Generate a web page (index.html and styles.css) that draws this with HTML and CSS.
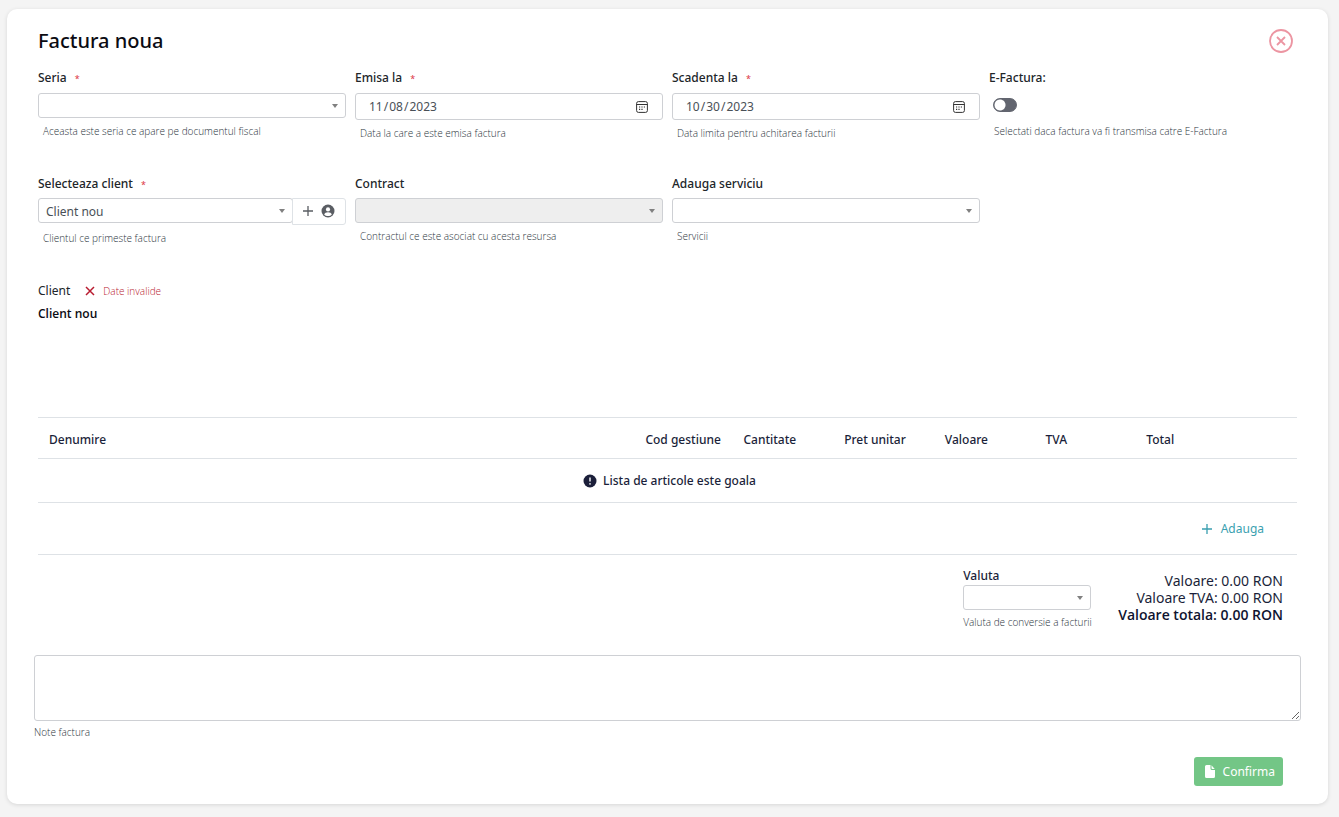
FILE: index.html
```html
<!DOCTYPE html>
<html lang="ro">
<head>
<meta charset="utf-8">
<title>Factura noua</title>
<link rel="stylesheet" href="styles.css">
</head>
<body>
<main class="card">
  <header class="card-header">
    <h1 class="title">Factura noua</h1>
    <button class="close" type="button" aria-label="Inchide">
      <svg width="24" height="24" viewBox="0 0 24 24" fill="none" stroke="currentColor" stroke-width="1.8"><circle cx="12" cy="12" r="11"/><path d="M8 8l8 8M16 8l-8 8"/></svg>
    </button>
  </header>

  <form class="form">
    <div class="fields">
      <div class="field">
        <label class="label" for="seria">Seria <span class="required">*</span></label>
        <select class="control select" id="seria"><option></option></select>
        <p class="help">Aceasta este seria ce apare pe documentul fiscal</p>
      </div>
      <div class="field">
        <label class="label" for="emisa">Emisa la <span class="required">*</span></label>
        <input class="control date" id="emisa" type="date" value="2023-11-08">
        <p class="help">Data la care a este emisa factura</p>
      </div>
      <div class="field">
        <label class="label" for="scadenta">Scadenta la <span class="required">*</span></label>
        <input class="control date" id="scadenta" type="date" value="2023-10-30">
        <p class="help">Data limita pentru achitarea facturii</p>
      </div>
      <div class="field">
        <label class="label" for="efactura">E-Factura:</label>
        <div class="switch-row"><input class="switch" id="efactura" type="checkbox" role="switch"></div>
        <p class="help">Selectati daca factura va fi transmisa catre E-Factura</p>
      </div>
    </div>

    <div class="fields fields-second">
      <div class="field">
        <label class="label" for="client">Selecteaza client <span class="required">*</span></label>
        <div class="group">
          <select class="control select" id="client"><option>Client nou</option></select>
          <button class="add-client" type="button" aria-label="Adauga client">
            <svg width="10" height="10" viewBox="0 0 10 10" fill="none" stroke="currentColor" stroke-width="1.3"><path d="M5 0v10M0 5h10"/></svg>
            <svg width="14" height="14" viewBox="0 0 14 14"><circle cx="7" cy="7" r="6.5" fill="currentColor"/><circle cx="7" cy="5.4" r="2.1" fill="#fff"/><path d="M3.2 10.6c.5-1.7 1.9-2.4 3.8-2.4s3.3.7 3.8 2.4c-1 1-2.3 1.5-3.8 1.5s-2.8-.5-3.8-1.5z" fill="#fff"/></svg>
          </button>
        </div>
        <p class="help">Clientul ce primeste factura</p>
      </div>
      <div class="field">
        <label class="label" for="contract">Contract</label>
        <select class="control select" id="contract" disabled><option></option></select>
        <p class="help">Contractul ce este asociat cu acesta resursa</p>
      </div>
      <div class="field">
        <label class="label" for="serviciu">Adauga serviciu</label>
        <select class="control select" id="serviciu"><option></option></select>
        <p class="help">Servicii</p>
      </div>
    </div>

    <section class="client">
      <div class="client-head">
        <span>Client</span>
        <span class="invalid">
          <svg width="10" height="10" viewBox="0 0 10 10" fill="none" stroke="currentColor" stroke-width="1.5"><path d="M1 1l8 8M9 1L1 9"/></svg>
          Date invalide
        </span>
      </div>
      <p class="client-name">Client nou</p>
    </section>

    <table class="items">
      <colgroup><col><col class="col-code"><col class="col-num"><col class="col-num"><col class="col-num"><col class="col-num"><col class="col-num"><col class="col-action"></colgroup>
      <thead>
        <tr><th>Denumire</th><th>Cod gestiune</th><th>Cantitate</th><th>Pret unitar</th><th>Valoare</th><th>TVA</th><th>Total</th><th></th></tr>
      </thead>
      <tbody>
        <tr class="row-empty"><td colspan="8"><div class="empty">
          <svg width="14" height="14" viewBox="0 0 14 14"><circle cx="7" cy="7" r="6.5" fill="currentColor"/><path d="M7 3.4v4.2" stroke="#fff" stroke-width="1.4"/><circle cx="7" cy="9.9" r=".8" fill="#fff"/></svg>
          Lista de articole este goala
        </div></td></tr>
        <tr class="row-add"><td colspan="8"><button class="add-item" type="button">
          <svg width="10" height="10" viewBox="0 0 10 10" fill="none" stroke="currentColor" stroke-width="1.3"><path d="M5 0v10M0 5h10"/></svg>
          Adauga
        </button></td></tr>
      </tbody>
    </table>

    <section class="summary">
      <div class="currency">
        <label class="currency-label" for="valuta">Valuta</label>
        <select class="control select" id="valuta"><option></option></select>
        <p class="currency-help">Valuta de conversie a facturii</p>
      </div>
      <div class="totals">
        <p>Valoare: 0.00 RON</p>
        <p>Valoare TVA: 0.00 RON</p>
        <p class="grand">Valoare totala: 0.00 RON</p>
      </div>
    </section>

    <div class="notes">
      <textarea class="notes-input" id="note"></textarea>
      <label class="notes-label" for="note">Note factura</label>
    </div>

    <footer class="actions">
      <button class="confirm" type="submit">
        <svg width="10" height="13" viewBox="0 0 10 13" fill="currentColor"><path d="M1.5 0H5.5V3.5Q5.5 5 7 5H10V11.5Q10 13 8.5 13H1.5Q0 13 0 11.5V1.5Q0 0 1.5 0z"/><path d="M6.5 .3L9.7 4H7.3Q6.5 4 6.5 3.2z"/></svg>
        Confirma
      </button>
    </footer>
  </form>
</main>
</body>
</html>
```
FILE: styles.css
```css
* { box-sizing: border-box; }

body {
  margin: 0;
  padding: 9px 11px 13px 7px;
  background: #f4f4f4;
  color: #212529;
  font: 12px/18px "Noto Sans", "Open Sans", sans-serif;
}

p, h1 { margin: 0; }

button, input, select, textarea { font: inherit; color: inherit; }

button { cursor: pointer; }

svg { display: block; flex: none; }

.card {
  padding: 16px 31px 18px;
  background: #fff;
  border-radius: 10px;
  box-shadow: 0 1px 4px rgba(0, 0, 0, .12);
}

.card-header {
  display: flex;
  justify-content: space-between;
  align-items: center;
  height: 32px;
  padding-right: 4px;
}

.title {
  color: #0b0b12;
  font-size: 20px;
  font-weight: 500;
  line-height: 32px;
}

.close {
  padding: 0;
  border: 0;
  background: none;
  color: #ec95a2;
}

.fields {
  display: grid;
  grid-template-columns: repeat(4, 1fr);
  gap: 9px;
  padding-top: 12px;
}

.fields-second { padding-top: 33px; }

.field { min-width: 0; }

.label {
  display: block;
  margin-bottom: 6px;
  font-weight: 500;
}

.fields-second .label { margin-bottom: 5px; }

.required {
  margin-left: 5px;
  color: #dc3545;
  font-size: 9px;
  font-weight: 400;
  line-height: 1;
}

.control {
  display: block;
  width: 100%;
  height: 25px;
  border: 1px solid #ced0d4;
  border-radius: 3px;
  background-color: #fff;
  color: #495057;
}

.select {
  appearance: none;
  padding: 2px 22px 0 7px;
  background-image: url("data:image/svg+xml,%3Csvg xmlns='http://www.w3.org/2000/svg' viewBox='0 0 6 4'%3E%3Cpath d='M0 0h6L3 4z' fill='%23808080'/%3E%3C/svg%3E");
  background-repeat: no-repeat;
  background-position: right 7px center;
  background-size: 6px 4px;
}

.select:disabled {
  background-color: #eee;
  opacity: 1;
}

.date {
  height: 27px;
  padding: 0 14px 0 12px;
}

.date::-webkit-calendar-picker-indicator {
  width: 12px;
  height: 12px;
  padding: 0;
  background: url("data:image/svg+xml,%3Csvg xmlns='http://www.w3.org/2000/svg' viewBox='0 0 12 12'%3E%3Crect x='.6' y='.6' width='10.8' height='10.8' rx='1.8' fill='none' stroke='%23333' stroke-width='1'/%3E%3Cpath d='M.6 3.5h10.8' stroke='%23333' stroke-width='1'/%3E%3Cpath d='M3 6h1.2M5.4 6h1.2M7.8 6h1.2M3 8.3h1.2M5.4 8.3h1.2' stroke='%23333' stroke-width='1.2'/%3E%3C/svg%3E") center / 12px 12px no-repeat;
}

.help, .currency-help, .notes-label {
  color: #2c353d;
  font-family: "Open Sans", "Noto Sans", sans-serif;
  font-size: 10px;
  font-weight: 300;
}

.help { padding: 4px 5px 0; }

.switch-row {
  display: flex;
  align-items: center;
  height: 25px;
  padding: 0 0 1px 4px;
}

.switch {
  appearance: none;
  width: 24px;
  height: 14px;
  margin: 0;
  border: 1px solid #62656f;
  border-radius: 7px;
  background: radial-gradient(circle at 6px 6px, #fff 5px, #62656f 6px);
}

.group {
  display: flex;
  align-items: flex-start;
}

.group .control { flex: 1; }

.add-client {
  display: flex;
  align-items: center;
  justify-content: center;
  gap: 8px;
  width: 54px;
  height: 27px;
  margin-left: -1px;
  padding: 0 0 2px;
  border: 1px solid #dee2e6;
  border-radius: 0 3px 3px 0;
  background: #fff;
  color: #5a5d63;
}

.client {
  min-height: 170px;
  padding-top: 35px;
}

.client-head {
  display: flex;
  align-items: center;
  gap: 15px;
}

.invalid {
  display: flex;
  align-items: center;
  gap: 8px;
  color: #b81c30;
  font-family: "Open Sans", "Noto Sans", sans-serif;
  font-size: 10px;
  font-weight: 300;
}

.client-name {
  padding-top: 5px;
  color: #0b0b12;
  font-family: "Open Sans", "Noto Sans", sans-serif;
  font-weight: 600;
}

.items {
  width: 100%;
  table-layout: fixed;
  border-collapse: collapse;
  color: #1b1f3a;
}

.items th, .items td {
  padding: 0 11px;
  border-top: 1px solid #dee2e6;
  border-bottom: 1px solid #dee2e6;
  text-align: left;
  font-weight: 500;
  white-space: nowrap;
}

.items th { height: 41px; padding-top: 3px; }

.col-code { width: 98px; }
.col-num { width: 8%; }
.col-action { width: 61px; }

.row-empty { height: 44px; }
.row-add { height: 52px; }

.empty {
  display: flex;
  align-items: center;
  justify-content: center;
  gap: 6px;
  padding-left: 4px;
}

.add-item {
  display: flex;
  align-items: center;
  gap: 9px;
  margin-left: auto;
  padding: 0 22px 0 0;
  border: 0;
  background: none;
  color: #3a9fb0;
  font-weight: 400;
}

.summary {
  display: flex;
  justify-content: flex-end;
  gap: 27px;
  padding: 12px 14px 0 0;
  color: #1b1f3a;
}

.currency { width: 128px; }

.currency-label {
  display: block;
  font-weight: 500;
}

.currency-help {
  padding-top: 3px;
  white-space: nowrap;
}

.totals {
  padding-top: 5px;
  font-size: 14px;
  line-height: 17px;
  text-align: right;
  white-space: nowrap;
}

.grand {
  color: #0f1430;
  font-family: "Open Sans", "Noto Sans", sans-serif;
  font-weight: 600;
}

.notes { margin: 24px -4px 0; }

.notes-input {
  display: block;
  width: 100%;
  height: 66px;
  padding: 6px;
  border: 1px solid #ced0d4;
  border-radius: 3px;
  resize: vertical;
}

.notes-label {
  display: block;
  padding-top: 2px;
}

.actions {
  display: flex;
  justify-content: flex-end;
  padding: 16px 14px 0 0;
}

.confirm {
  display: flex;
  align-items: center;
  gap: 8px;
  height: 29px;
  padding: 0 8px 0 11px;
  border: 0;
  border-radius: 3px;
  background: #73c686;
  color: #fff;
}
```
